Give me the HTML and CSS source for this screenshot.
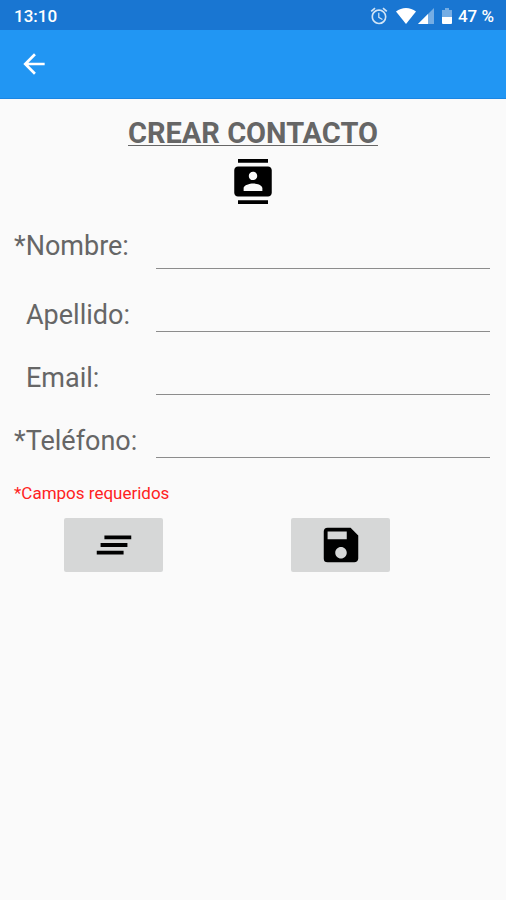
FILE: index.html
```html
<!DOCTYPE html>
<html lang="es">
<head>
<meta charset="utf-8">
<meta name="viewport" content="width=device-width, initial-scale=1">
<title>Crear contacto</title>
<link rel="stylesheet" href="styles.css">
</head>
<body>
<div class="status-bar">
  <span>13:10</span>
  <div class="status-icons">
    <svg class="alarm" viewBox="0 0 24 24" aria-hidden="true"><path d="M22 5.720l-4.600-3.860-1.290 1.530 4.600 3.860L22 5.720zM7.880 3.390L6.600 1.860 2 5.710l1.290 1.530 4.590-3.850zM12.500 8H11v6l4.750 2.850.75-1.230-4-2.370V8zM12 4c-4.970 0-9 4.030-9 9s4.020 9 9 9a9 9 0 0 0 0-18zm0 16c-3.870 0-7-3.130-7-7s3.130-7 7-7 7 3.130 7 7-3.130 7-7 7z"/></svg>
    <svg class="wifi" viewBox="0 0 20 16" aria-hidden="true"><path d="M10 16L0 3.600C3 1.200 6.300 0 10 0s7 1.200 10 3.600z"/></svg>
    <svg class="signal" viewBox="0 0 16 16" aria-hidden="true"><path class="dim" d="M16 0v16H0z"/><path d="M10 6v10H0z"/></svg>
    <svg class="battery" viewBox="0 0 10 16" aria-hidden="true"><path class="dim" d="M3 0h4v2h3v7H0V2h3z"/><path d="M0 9h10v6q0 1-1 1H1q-1 0-1-1z"/></svg>
    <span>47 %</span>
  </div>
</div>
<header class="app-bar">
  <button class="back" type="button" aria-label="Volver">
    <svg viewBox="0 0 24 24" aria-hidden="true"><path d="M20 11H7.830l5.590-5.590L12 4l-8 8 8 8 1.410-1.410L7.830 13H20v-2z"/></svg>
  </button>
</header>
<main>
  <h1>CREAR CONTACTO</h1>
  <svg class="contact-icon" viewBox="0 0 24 24" aria-hidden="true"><path d="M20 0H4v2h16V0zM4 24h16v-2H4v2zM20 4H4c-1.100 0-2 .9-2 2v12c0 1.100.9 2 2 2h16c1.100 0 2-.9 2-2V6c0-1.100-.9-2-2-2zm-8 2.750c1.240 0 2.250 1.010 2.250 2.250s-1.010 2.250-2.250 2.250S9.750 10.240 9.750 9 10.760 6.750 12 6.750zM17 17H7v-1.500c0-1.670 3.330-2.500 5-2.500s5 .83 5 2.500V17z"/></svg>
  <form>
    <div class="field first">
      <label for="nombre">*Nombre:</label>
      <input id="nombre" type="text" required>
    </div>
    <div class="field">
      <label class="optional" for="apellido">Apellido:</label>
      <input id="apellido" type="text">
    </div>
    <div class="field">
      <label class="optional" for="email">Email:</label>
      <input id="email" type="email">
    </div>
    <div class="field">
      <label for="telefono">*Teléfono:</label>
      <input id="telefono" type="tel" required>
    </div>
    <p class="note">*Campos requeridos</p>
    <div class="actions">
      <button type="reset" aria-label="Limpiar">
        <svg viewBox="0 0 24 24" aria-hidden="true"><path d="M5 13h14v-2H5v2zm-2 4h14v-2H3v2zM7 7v2h14V7H7z"/></svg>
      </button>
      <button type="submit" aria-label="Guardar">
        <svg viewBox="0 0 24 24" aria-hidden="true"><path d="M17 3H5a2 2 0 0 0-2 2v14a2 2 0 0 0 2 2h14c1.100 0 2-.9 2-2V7l-4-4zm-5 16c-1.660 0-3-1.340-3-3s1.340-3 3-3 3 1.340 3 3-1.340 3-3 3zm3-10H5V5h10v4z"/></svg>
      </button>
    </div>
  </form>
</main>
</body>
</html>
```
FILE: styles.css
```css
* {
  box-sizing: border-box;
}

body {
  margin: 0;
  min-height: 100vh;
  background: #fafafa;
  color: #666;
  font-family: Roboto, "Liberation Sans", sans-serif;
}

button {
  border: 0;
  padding: 0;
}

svg {
  display: block;
}

.status-bar {
  display: flex;
  justify-content: space-between;
  align-items: center;
  height: 30px;
  padding: 2px 12px 0 14px;
  background: #1976d2;
  color: #fff;
  font-size: 17px;
  font-weight: 500;
  line-height: 20px;
}

.status-icons {
  display: flex;
  align-items: center;
}

.status-icons svg {
  height: 16px;
  fill: #fff;
}

.status-icons .dim {
  fill: #75ade4;
}

.status-icons .alarm {
  width: 20px;
  height: 20px;
  margin-right: 7px;
  fill: #d1e4f6;
}

.wifi {
  width: 20px;
  margin-right: 2px;
}

.signal {
  width: 16px;
  margin-right: 8px;
}

.battery {
  width: 10px;
  margin-right: 6px;
}

.app-bar {
  display: flex;
  align-items: center;
  height: 69px;
  padding: 0 18px;
  background: #2196f3;
  border-bottom: 1px solid #1b86e3;
}

.back {
  background: none;
}

.back svg {
  width: 32px;
  height: 32px;
  fill: #fff;
}

main {
  padding-top: 16px;
}

h1 {
  margin: 0 0 8px;
  font-size: 29px;
  font-weight: 700;
  line-height: 36px;
  text-align: center;
  text-decoration: underline;
  text-decoration-thickness: 1px;
  text-underline-offset: 2px;
}

.contact-icon {
  width: 46px;
  height: 45px;
  margin: 0 auto;
}

form {
  padding: 0 16px 0 14px;
}

.field {
  display: grid;
  grid-template-columns: 142px 1fr;
  align-items: end;
  height: 63px;
}

.field label {
  font-size: 27px;
  font-weight: 400;
  line-height: 34px;
}

.field.first {
  height: 65px;
}

.field.first label {
  padding-bottom: 6px;
}

.field .optional {
  padding-left: 12px;
}

.field input {
  width: 100%;
  height: 42px;
  padding: 0 4px;
  border: 0;
  border-bottom: 1px solid #8c8c8c;
  background: none;
  color: #222;
  font: inherit;
  font-size: 24px;
  outline: 0;
}

.note {
  margin: 25px 0 15px;
  color: #f22;
  font-size: 17px;
  line-height: 20px;
}

.actions {
  display: grid;
  grid-template-columns: 227px 1fr;
  padding-left: 50px;
}

.actions button {
  display: grid;
  place-items: center;
  width: 99px;
  height: 54px;
  border-radius: 2px;
  background: #d6d7d7;
}

.actions svg {
  width: 46px;
  height: 46px;
}
```
